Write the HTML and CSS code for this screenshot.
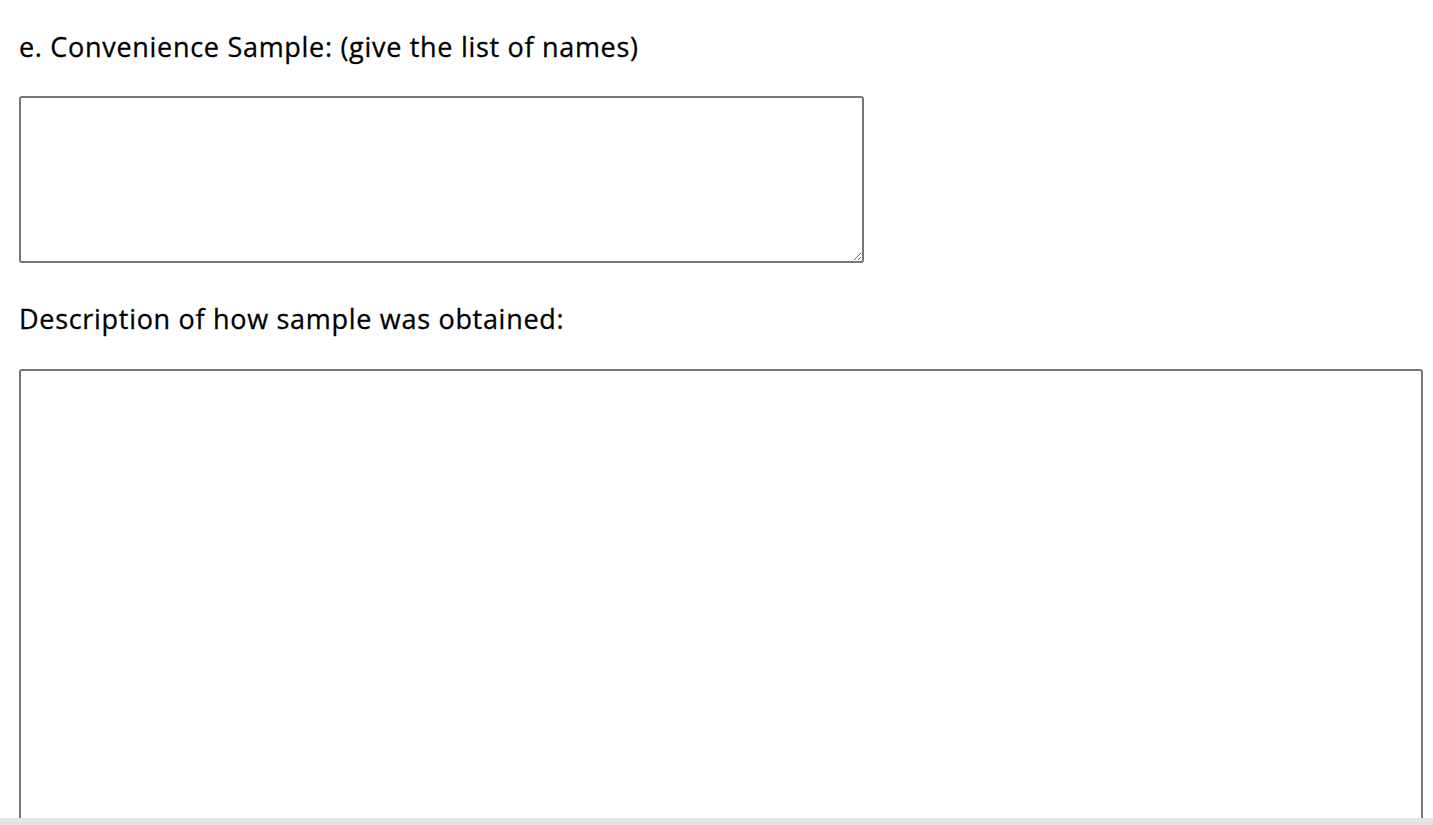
FILE: index.html
```html
<!DOCTYPE html>
<html lang="en">
<head>
<meta charset="utf-8">
<title>Sample</title>
<link rel="stylesheet" href="styles.css">
</head>
<body>
<main class="form">
  <label class="label label-first" for="names">e. Convenience Sample: (give the list of names)</label>
  <textarea id="names" class="box box-small"></textarea>
  <label class="label label-second" for="desc">Description of how sample was obtained:</label>
  <textarea id="desc" class="box box-large"></textarea>
</main>
<div class="scroll-track"></div>
</body>
</html>
```

FILE: styles.css
```css
html, body {
  margin: 0;
  padding: 0;
  background: #fff;
}
body {
  font-family: "Open Sans", "DejaVu Sans", sans-serif;
  color: #000;
}
.form {
  display: flex;
  flex-direction: column;
  align-items: flex-start;
  padding: 0 10px 0 19px;
}
.label {
  display: block;
  font-size: 27px;
  line-height: 30px;
  height: 30px;
  letter-spacing: 0.7px;
  -webkit-text-stroke: 0.3px #000;
}
.label-first {
  margin-top: 32px;
}
.label-second {
  margin-top: 41px;
}
.box {
  box-sizing: border-box;
  border: 2px solid #777;
  border-radius: 3px;
  background: #fff;
  padding: 2px;
  margin: 0;
  font: 16px "Liberation Mono", monospace;
}
.box-small {
  margin-top: 34px;
  width: 845px;
  height: 167px;
}
.box-large {
  margin-top: 35px;
  width: 1404px;
  height: 520px;
}
.scroll-track {
  position: fixed;
  left: 0;
  right: 0;
  bottom: 0;
  height: 7px;
  background: #e3e3e3;
}
```
